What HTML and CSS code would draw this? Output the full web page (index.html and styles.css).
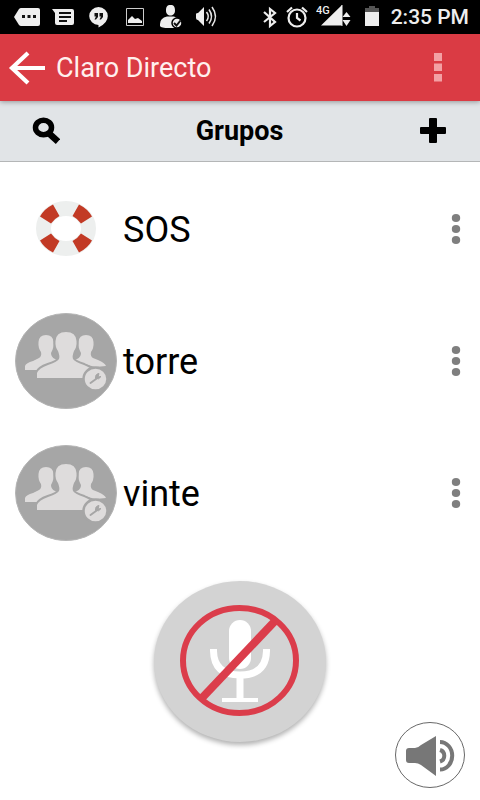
FILE: index.html
```
<!DOCTYPE html>
<html lang="es">
<head>
<meta charset="utf-8">
<meta name="viewport" content="width=device-width, initial-scale=1">
<title>Claro Directo</title>
<link rel="stylesheet" href="styles.css">
</head>
<body>
<svg class="defs" aria-hidden="true">
  <symbol id="group" viewBox="0 0 102 96">
    <ellipse cx="51" cy="48" rx="50.500" ry="47.500" fill="#a6a6a6" stroke="#b4b4b4"/>
    <g fill="#dedcdc">
      <path d="M10 57V53Q11 50 18 48L24 45Q27 43 26 39Q23 35 23.500 29Q24 22 31 22Q38 22 38.500 29Q39 35 36 40Q36 44 40 46L46 49V57Z"/>
      <path d="M91 53Q90 50 83 47L78 45Q75 43 76 39Q79 35 78.500 29Q78 22 71 22Q64 22 63.500 29Q63 35 66 40Q66 44 62 46L56 47L80 54Z"/>
    </g>
    <path d="M22 65V60Q24 55 33 52Q42 49 44 46Q45 43 43 38Q40 34 40.500 28Q41 19 51 19Q61 19 61.500 28Q62 34 59 38Q57 43 58 46Q60 49 69 52Q77 55 80 60V65Z" fill="#dedcdc" stroke="#a6a6a6" stroke-width="4" paint-order="stroke"/>
    <ellipse cx="80.500" cy="66" rx="12" ry="11.500" fill="#dedcdc" stroke="#a6a6a6" stroke-width="2.500"/>
    <path d="M75.500 70L81 66" stroke="#a6a6a6" stroke-width="2" stroke-linecap="round"/>
    <path d="M84 60.500Q80 61 80.500 65.500Q84 67 86 63.500L83 64Z" fill="#a6a6a6" stroke="#a6a6a6"/>
  </symbol>
  <symbol id="dots" viewBox="0 0 10 32">
    <g fill="#7f7f7f"><ellipse cx="5" cy="5" rx="4.200" ry="4"/><ellipse cx="5" cy="16" rx="4.200" ry="4"/><ellipse cx="5" cy="27" rx="4.200" ry="4"/></g>
  </symbol>
</svg>

<div class="status">
  <div class="notices">
    <svg viewBox="0 0 28 34"><path d="M8 8H25Q27 8 27 10V24Q27 26 25 26H8Q7 26 6 25L1 17L6 9Q7 8 8 8Z" fill="#eee"/><path d="M9 15h3v3H9zM14.500 15h3v3h-3zM20 15h3v3h-3z" fill="#111"/></svg>
    <svg viewBox="0 0 28 34"><path d="M3 9H23Q25 9 25 11V23Q25 25 23 25H8Q6 25 6 23V13Z" fill="#eee"/><path d="M10 13H22M10 17H22M10 21H18" stroke="#111" stroke-width="2"/></svg>
    <svg viewBox="0 0 28 34"><path d="M13.500 7A9.300 9 0 0 1 22.800 16Q22.800 23 13.500 27.500V25A9.300 9 0 0 1 13.500 7Z" fill="#eee"/><path d="M9.500 13H13V17L11 19.500H9.500L11 16.500H9.500ZM14.500 13H18V17L16 19.500H14.500L16 16.500H14.500Z" fill="#111"/></svg>
    <svg viewBox="0 0 28 34"><path d="M5.500 8.500H22.500V25.500H5.500Z" fill="none" stroke="#ccc"/><path d="M7 23V20L11 16L14 19L17 18L21 21V23Z" fill="#eee"/></svg>
    <svg viewBox="0 0 28 34"><path d="M13.500 5C10 5 9 7 9 10.500C9 14 11 15.500 13.500 15.500C16 15.500 18 14 18 10.500C18 7 17 5 13.500 5ZM10 16.500Q3 18 3 24V26Q4 28 12 28H20V18L17 16.500Z" fill="#eee"/><circle cx="20" cy="23" r="5" fill="#eee" stroke="#000" stroke-width="1.500"/><path d="M17 23L19.500 25.500L23.500 20.500" fill="none" stroke="#111" stroke-width="2"/></svg>
    <svg viewBox="0 0 28 34"><path d="M3 14Q3 13 5 13L11 7V26L5 20Q3 20 3 18Z" fill="#eee"/><path d="M13.500 12Q17 16.500 13.500 21M16 9.500Q21 16.500 16 23.500M19 7Q26 16.500 19 26" fill="none" stroke="#e4e4e4" stroke-width="1.600"/></svg>
  </div>
  <div class="system">
    <svg class="bluetooth" viewBox="0 0 18 34"><path d="M4 12L15 22L10 26V9L15 13L4 22" fill="none" stroke="#eee" stroke-width="2.200"/></svg>
    <svg class="alarm" viewBox="0 0 22 34"><ellipse cx="11" cy="18" rx="8.500" ry="8.500" fill="none" stroke="#eee" stroke-width="2.200"/><path d="M11 13V18L14.500 20.500M1 12L6 7.500M21 12L16 7.500" fill="none" stroke="#eee" stroke-width="2.200"/></svg>
    <svg class="signal" viewBox="0 0 40 34"><text class="network" x="0" y="14">4G</text><path d="M26 5V25.500H5ZM30.500 12L34.500 17H26.500ZM30.500 26L34.500 20H26.500Z" fill="#eee"/><path d="M26 5V26" stroke="#eee"/></svg>
    <svg class="battery" viewBox="0 0 16 34"><path d="M1 8H5V6H11V8H15V12H1Z" fill="#555"/><path d="M1 12H15V26H1Z" fill="#eee"/></svg>
    <time>2:35 PM</time>
  </div>
</div>

<header class="appbar">
  <button class="back" aria-label="Volver"><svg viewBox="0 0 38 34"><path d="M37 17H4M20 2L4 17L20 32" fill="none" stroke="#fff" stroke-width="4.200"/></svg></button>
  <h1>Claro Directo</h1>
  <button class="overflow" aria-label="Menú"><svg viewBox="0 0 8 30"><path d="M0 0H8V8H0ZM0 10.500H8V18H0ZM0 21H8V28.500H0Z" fill="#f3a0a4"/></svg></button>
</header>

<nav class="toolbar">
  <button aria-label="Buscar"><svg viewBox="0 0 28 28"><ellipse cx="11.500" cy="10.500" rx="8" ry="7.200" fill="none" stroke="#000" stroke-width="5.500"/><path d="M16 15.500L26 24.500" stroke="#000" stroke-width="6.500"/></svg></button>
  <h2>Grupos</h2>
  <button aria-label="Añadir"><svg viewBox="0 0 28 28"><path d="M11 1H17Q18 1 18 2V10H26Q27 10 27 11V16Q27 17 26 17H18V25Q18 26 17 26H11Q10 26 10 25V17H2Q1 17 1 16V11Q1 10 2 10H10V2Q10 1 11 1Z"/></svg></button>
</nav>

<main>
  <ul class="groups">
    <li>
      <svg class="avatar" viewBox="0 0 102 96"><ellipse cx="51" cy="47.500" rx="22.500" ry="20" fill="none" stroke="#edefee" stroke-width="15"/>
        <path fill="#c23a25" d="M25 35.500Q29 28 38 23.500L44.500 35Q39 38 36 42.500ZM77 35.500Q73 28 64 23.500L57.500 35Q63 38 66 42.500ZM25 59.500Q29 67 38 71.500L44.500 60Q39 57 36 52.500ZM77 59.500Q73 67 64 71.500L57.500 60Q63 57 66 52.500Z"/></svg>
      <span>SOS</span>
      <button aria-label="Opciones de SOS"><svg><use href="#dots"/></svg></button>
    </li>
    <li>
      <svg class="avatar"><use href="#group"/></svg>
      <span>torre</span>
      <button aria-label="Opciones de torre"><svg><use href="#dots"/></svg></button>
    </li>
    <li>
      <svg class="avatar"><use href="#group"/></svg>
      <span>vinte</span>
      <button aria-label="Opciones de vinte"><svg><use href="#dots"/></svg></button>
    </li>
  </ul>
</main>

<footer>
  <button class="talk" aria-label="Hablar">
    <svg viewBox="0 0 172 161">
      <rect x="75" y="39" width="22" height="49" rx="11" fill="#fff"/>
      <path d="M59.500 68V70Q60 94 86 94Q112 94 112.500 70V68" fill="none" stroke="#fff" stroke-width="7"/>
      <path d="M86 95V119" stroke="#fff" stroke-width="7"/>
      <path d="M68 119H104" stroke="#fff" stroke-width="4"/>
      <path d="M48 117L121 40" stroke="#db3d4b" stroke-width="8"/>
      <ellipse cx="85.500" cy="79.500" rx="56.500" ry="52.500" fill="none" stroke="#db3d4b" stroke-width="6"/>
    </svg>
  </button>
  <button class="sound" aria-label="Altavoz">
    <svg viewBox="0 0 70 66"><ellipse cx="35" cy="33" rx="34.500" ry="32.500" fill="#fff" stroke="#686868"/><path d="M14 26H20Q23 26 26 23L41 14V54L26 43Q23 41 20 41H14Q11 41 11 38V29Q11 26 14 26Z" fill="#777"/><path d="M45 28A6 6 0 0 1 45 39.500M45 20A12 13.500 0 0 1 45 47.500" fill="none" stroke="#777" stroke-width="4"/></svg>
  </button>
</footer>
</body>
</html>
```
FILE: styles.css
```
* { box-sizing: border-box; }

body {
  margin: 0;
  min-height: 100vh;
  display: flex;
  flex-direction: column;
  background: #fff;
  color: #000;
  font-family: Roboto, sans-serif;
}

button {
  display: flex;
  align-items: center;
  justify-content: center;
  padding: 0;
  border: 0;
  background: none;
}

h1, h2 { margin: 0; }

svg { display: block; flex: none; }

.defs { position: absolute; width: 0; height: 0; }

.status {
  display: flex;
  justify-content: space-between;
  align-items: center;
  height: 34px;
  padding: 0 11px 0 13px;
  background: #000;
  color: #eee;
}

.notices, .system { display: flex; align-items: center; gap: 8px; }
.notices svg { width: 28px; height: 34px; }
.system svg { height: 34px; }
.bluetooth { width: 18px; }
.alarm { width: 22px; }
.signal { width: 40px; }
.battery { width: 16px; }
.network { font-size: 11px; font-weight: 500; fill: #eee; }
.status time { padding-left: 3px; font-size: 21px; font-weight: 500; line-height: 34px; }

.appbar {
  position: relative;
  display: flex;
  align-items: center;
  height: 67px;
  padding: 0 32px 0 8px;
  background: #da3b44;
  color: #fff0ee;
  box-shadow: 0 1px 5px rgba(0, 0, 0, 0.35);
}

.appbar h1 { flex: 1; padding-left: 10px; font-size: 27px; font-weight: 400; }
.back svg { width: 38px; height: 34px; }
.overflow { width: 20px; height: 40px; }
.overflow svg { width: 8px; height: 30px; }

.toolbar {
  display: flex;
  align-items: center;
  justify-content: space-between;
  height: 61px;
  padding: 0 33px 0 32px;
  border-bottom: 1px solid #b4b6b7;
  background: #e1e4e7;
}

.toolbar svg { width: 28px; height: 28px; }
.toolbar h2 { font-size: 27px; font-weight: 700; }

.groups { margin: 0; padding: 1px 0 0; list-style: none; }

.groups li {
  display: flex;
  align-items: center;
  gap: 6px;
  height: 132px;
  padding: 0 14px 0 15px;
}

.avatar { width: 102px; height: 96px; }
.groups span { flex: 1; padding-top: 2px; font-size: 36px; line-height: 44px; }
.groups button { width: 20px; height: 48px; }
.groups button svg { width: 10px; height: 32px; }

footer {
  display: grid;
  grid-template-columns: 1fr auto 1fr;
  padding: 22px 15px 12px;
}

.talk {
  grid-column: 2;
  width: 172px;
  height: 161px;
  border-radius: 50%;
  background: #d3d3d3;
  box-shadow: 0 3px 5px rgba(0, 0, 0, 0.3);
}

.talk svg { width: 172px; height: 161px; }

.sound {
  grid-column: 3;
  justify-self: end;
  margin-top: 141px;
}

.sound svg { width: 70px; height: 66px; }
```
